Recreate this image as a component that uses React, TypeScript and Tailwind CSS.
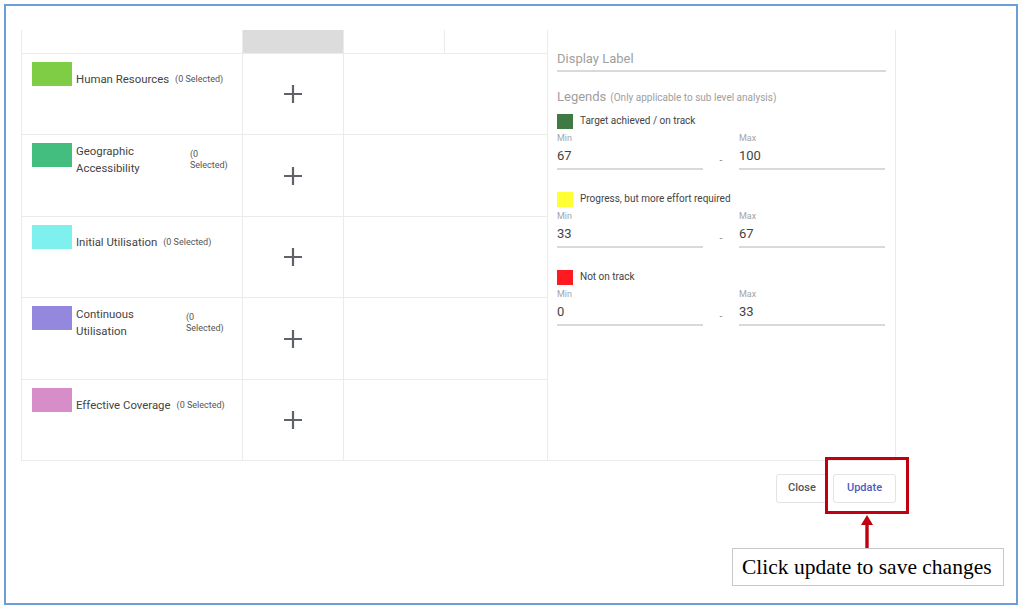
import React from "react";

type Row = {
  name: string;
  color: string;
  h: string;
  wrap?: string;
};

const rows: Row[] = [
  { name: "Human Resources", color: "bg-[#7ecd45]", h: "h-[81px]" },
  { name: "Geographic Accessibility", color: "bg-[#43be7e]", h: "h-[82px]", wrap: "w-[110px]" },
  { name: "Initial Utilisation", color: "bg-[#7ef0ee]", h: "h-[81px]" },
  { name: "Continuous Utilisation", color: "bg-[#9388de]", h: "h-[82px]", wrap: "w-[106px]" },
  { name: "Effective Coverage", color: "bg-[#d78dc8]", h: "h-[81px]" },
];

const Plus = () => (
  <svg width="20" height="20" viewBox="0 0 20 20" className="block">
    <path d="M10 1 V19 M1 10 H19" stroke="#5f6368" strokeWidth="2.2" fill="none" />
  </svg>
);

const Legend = ({ color, label, min, max, mt }: { color: string; label: string; min: string; max: string; mt: string }) => (
  <div className={mt}>
    <div className="flex items-center h-[16px]">
      <div className={`w-[16px] h-[15px] ${color}`} />
      <span className="ml-[7px] text-[10px] leading-[12px] text-[#444]">{label}</span>
    </div>
    <div className="flex mt-[4px]">
      <div className="w-[146px]">
        <div className="text-[9px] leading-[10px] text-[#a5a5a5]">Min</div>
        <div className="mt-[5px] text-[13px] leading-[16px] text-[#444] pb-[4px] border-b-2 border-[#d9d9d9]">{min}</div>
      </div>
      <div className="w-[36px] flex justify-center pt-[22px]">
        <span className="text-[10px] leading-[12px] text-[#888]">-</span>
      </div>
      <div className="w-[146px]">
        <div className="text-[9px] leading-[10px] text-[#a5a5a5]">Max</div>
        <div className="mt-[5px] text-[13px] leading-[16px] text-[#444] pb-[4px] border-b-2 border-[#d9d9d9]">{max}</div>
      </div>
    </div>
  </div>
);

export default function App() {
  return (
    <div className="relative w-[1022px] h-[608px] bg-white pt-[4px] pl-[4px] font-['Roboto',sans-serif]">
      <div className="w-[1014px] h-[601px] border-2 border-[#6c9fd6] pt-[24px] pl-[15px]">
        <div className="w-[875px] flex border-l border-b border-[#ebebeb]">
          {/* left table */}
          <div className="w-[525px] flex flex-col">
            <div className="flex h-[23px]">
              <div className="w-[221px] border-r border-[#ebebeb]" />
              <div className="w-[101px] bg-[#dcdcdc] border-r border-[#ebebeb]" />
              <div className="w-[101px] border-r border-[#ebebeb]" />
              <div className="flex-1" />
            </div>
            {rows.map((r) => (
              <div key={r.name} className={`flex ${r.h} border-t border-[#ebebeb]`}>
                <div className="w-[221px] border-r border-[#ebebeb] flex items-start pl-[10px] pt-[8px]">
                  <div className={`w-[40px] h-[24px] ${r.color} shrink-0`} />
                  <div className="ml-[4px] h-[34px] flex items-center">
                    {r.wrap ? (
                      <>
                        <span className={`${r.wrap} text-[11.4px] leading-[17px] text-[#444]`}>{r.name}</span>
                        <span className="ml-[4px] w-[42px] text-[9px] leading-[11px] text-[#555]">(0 Selected)</span>
                      </>
                    ) : (
                      <>
                        <span className="text-[11.4px] leading-[17px] text-[#444] whitespace-nowrap">{r.name}</span>
                        <span className="ml-[6px] text-[9px] leading-[11px] text-[#555] whitespace-nowrap">(0 Selected)</span>
                      </>
                    )}
                  </div>
                </div>
                <div className="w-[101px] border-r border-[#ebebeb] flex items-center justify-center">
                  <Plus />
                </div>
                <div className="flex-1" />
              </div>
            ))}
          </div>
          {/* right panel */}
          <div className="w-[349px] border-l border-r border-[#ebebeb] px-[9px] pt-[21px]">
            <div className="text-[13px] leading-[16px] text-[#a0a0a0] pb-[3px] border-b-2 border-[#d9d9d9]">Display Label</div>
            <div className="mt-[17px] h-[16px] flex items-baseline text-[#9e9e9e]">
              <span className="text-[13px] leading-[16px]">Legends</span>
              <span className="ml-[4px] text-[10px] leading-[16px]">(Only applicable to sub level analysis)</span>
            </div>
            <Legend mt="mt-[8px]" color="bg-[#3e7a42]" label="Target achieved / on track" min="67" max="100" />
            <Legend mt="mt-[21px]" color="bg-[#ffff33]" label="Progress, but more effort required" min="33" max="67" />
            <Legend mt="mt-[21px]" color="bg-[#ff1a22]" label="Not on track" min="0" max="33" />
          </div>
        </div>
        <div className="w-[875px] flex justify-end gap-[5px] mt-[13px]">
          <button className="w-[52px] h-[29px] border border-[#e3e3e3] rounded-[3px] text-[11px] font-medium text-[#555]">Close</button>
          <button className="w-[63px] h-[29px] border border-[#e3e3e3] rounded-[3px] text-[11px] font-medium text-[#4e5cbf]">Update</button>
        </div>
      </div>

      {/* annotation overlay */}
      <div className="absolute left-[825px] top-[457px] w-[84px] h-[57px] border-[3px] border-[#c00010]" />
      <svg className="absolute left-[860px] top-[514px]" width="14" height="36" viewBox="0 0 14 36">
        <path d="M7 1 L13 11 L1 11 Z" fill="#c00010" />
        <rect x="5.3" y="10" width="3.4" height="26" fill="#c00010" />
      </svg>
      <div className="absolute left-[732px] top-[548px] w-[272px] h-[38px] border border-[#c8c8c8] bg-white flex items-center pl-[9px]">
        <span className="font-['Liberation_Serif',serif] text-[21.5px] leading-[24px] text-black whitespace-nowrap">Click update to save changes</span>
      </div>
    </div>
  );
}
